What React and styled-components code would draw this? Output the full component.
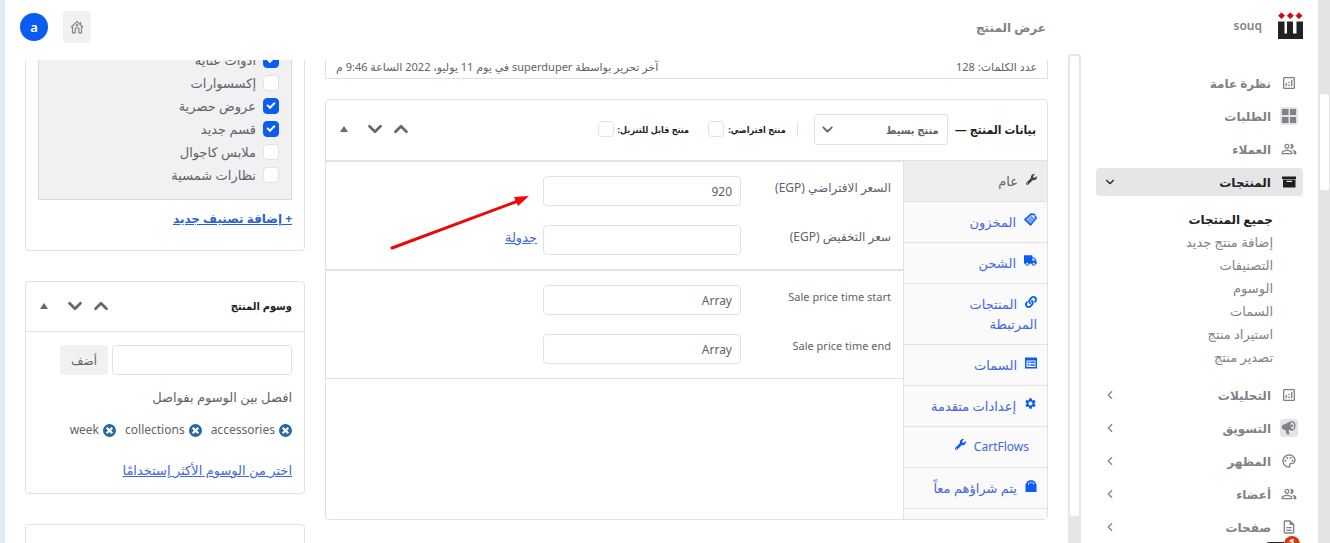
import React from "react";
import styled, { createGlobalStyle, css } from "styled-components";
import { FaWrench, FaTruck, FaLink } from "react-icons/fa";
import {
  MdOutlineAnalytics,
  MdOutlinePeopleAlt,
  MdOutlinePalette,
  MdOutlineDescription,
  MdSettings,
} from "react-icons/md";
import { ChevronDown, ChevronUp, ChevronLeft } from "lucide-react";

const c = {
  line: "#e2e2e4",
  track: "#e6e6e9",
  soft: "#f1f1f3",
  blue: "#0b5cf0",
  link: "#4468da",
  text: "#626266",
  mute: "#828286",
  dark: "#1f1f22",
};

const condensed = `"Noto Sans", "DejaVu Sans Condensed", "DejaVu Sans", sans-serif`;

const GlobalStyle = createGlobalStyle`
  *, *::before, *::after { box-sizing: border-box; }
  body { margin: 0; background: #fff; overflow: hidden; }
  body, button, input, select {
    font-family: "Noto Sans", "DejaVu Sans", sans-serif;
    font-size: 12px;
    color: ${c.text};
  }
  button { border: 0; padding: 0; background: none; cursor: pointer; }
  ul { list-style: none; margin: 0; padding: 0; }
  h1, h2, p { margin: 0; }
  svg { display: block; flex: none; }
`;

const Shell = styled.div`
  display: flex;
  height: 100vh;
  overflow: hidden;
  border-left: 5px solid #e1eaf3;
`;

const PageScroll = styled.div`
  width: 12px;
  flex: none;
  padding: 94px 1px 0 2px;
  background: #e4e4e7;
  &::before {
    content: "";
    display: block;
    height: 96px;
    border-radius: 2px;
    background: #fff;
  }
`;

const Sidebar = styled.aside`
  width: 237px;
  flex: none;
  padding: 12px 15px 0;
  position: relative;
`;

const Brand = styled.a`
  display: flex;
  align-items: center;
  gap: 16px;
  height: 27px;
  margin-bottom: 30px;
  font-size: 12px;
  font-weight: 600;
  color: ${c.mute};
  text-decoration: none;
`;

const NavList = styled.ul`
  display: flex;
  flex-direction: column;
  gap: 5px;
`;

const NavLink = styled.a`
  display: flex;
  align-items: center;
  gap: 9px;
  height: 28px;
  padding: 0 5px 0 7px;
  border-radius: 4px;
  font-size: 12px;
  font-weight: 700;
  text-decoration: none;
  color: ${(p) => (p.$active ? c.dark : c.mute)};
  background: ${(p) => (p.$active ? c.track : "transparent")};
`;

const NavIcon = styled.span`
  display: grid;
  place-items: center;
  width: 18px;
  height: 18px;
  border-radius: 3px;
  background: ${(p) => (p.$boxed ? "#e4e4e8" : "transparent")};
`;

const NavText = styled.span`
  flex: 1;
`;

const SubList = styled.ul`
  padding: 12px 30px 12px 0;
`;

const SubLink = styled.a`
  display: block;
  font-size: ${(p) => (p.$current ? 12 : 13)}px;
  line-height: 23px;
  text-decoration: none;
  white-space: nowrap;
  color: ${(p) => (p.$current ? c.dark : c.mute)};
  font-weight: ${(p) => (p.$current ? 700 : 400)};
`;

const Notice = styled.div`
  position: absolute;
  right: 18px;
  bottom: -9px;
  width: 16px;
  height: 16px;
  border-radius: 50%;
  background: #d43a12;
  color: #fff;
  font-size: 12px;
  line-height: 16px;
  text-align: center;
  font-weight: 700;
  &::after {
    content: "";
    position: absolute;
    right: 16px;
    top: 6px;
    width: 22px;
    height: 8px;
    border-radius: 8px 0 0 0;
    background: #222;
  }
`;

const Content = styled.div`
  flex: 1;
  min-width: 0;
  display: flex;
`;

const PaneScroll = styled.div`
  width: 13px;
  flex: none;
  margin-top: 54px;
  padding: 2px 2px 27px;
  border-radius: 3px 3px 0 0;
  background: ${c.track};
  &::before {
    content: "";
    display: block;
    height: 100%;
    border-radius: 2px;
    background: #fff;
  }
`;

const Pane = styled.div`
  flex: 1;
  min-width: 0;
  display: flex;
  flex-direction: column;
`;

const TopBar = styled.header`
  display: flex;
  align-items: center;
  gap: 15px;
  flex: none;
  height: 60px;
  padding: 0 22px 6px 15px;
`;

const PageTitle = styled.h1`
  flex: 1;
  font-size: 12px;
  font-weight: 700;
  color: ${c.mute};
`;

const HomeButton = styled.button`
  display: grid;
  place-items: center;
  width: 28px;
  height: 32px;
  border-radius: 3px;
  background: ${c.soft};
  color: #88888c;
`;

const Avatar = styled.button`
  width: 28px;
  height: 28px;
  border-radius: 50%;
  background: ${c.blue};
  color: #fff;
  font-size: 13px;
  font-weight: 600;
`;

const Viewport = styled.div`
  flex: 1;
  min-height: 0;
  overflow: hidden;
`;

const Columns = styled.div`
  display: flex;
  gap: 20px;
  margin-top: -12px;
  padding: 0 20px;
`;

const Main = styled.main`
  flex: 1;
  min-width: 0;
  display: flex;
  flex-direction: column;
  gap: 20px;
`;

const Aside = styled.div`
  width: 280px;
  flex: none;
  display: flex;
  flex-direction: column;
  gap: 30px;
`;

const StatusBar = styled.div`
  display: flex;
  justify-content: space-between;
  align-items: center;
  height: 31px;
  padding: 6px 10px 0;
  border: 1px solid ${c.line};
  border-top: 0;
  font-size: 11px;
`;

const Panel = styled.section`
  border: 1px solid ${c.line};
  border-radius: 4px;
  ${(p) =>
    p.$continued &&
    css`
      border-top: 0;
      border-radius: 0 0 4px 4px;
    `}
`;

const PanelHead = styled.div`
  display: flex;
  align-items: center;
  height: ${(p) => (p.$tall ? 61 : 50)}px;
  padding: 0 ${(p) => (p.$tall ? 11 : 12)}px 2px 12px;
  border-bottom: 1px solid ${c.line};
`;

const PanelTitle = styled.h2`
  font-family: ${condensed};
  font-size: ${(p) => (p.$large ? 12 : 11)}px;
  font-weight: 700;
  color: ${c.dark};
  white-space: nowrap;
`;

const SelectWrap = styled.div`
  position: relative;
  margin: 0 7px 0 10px;
  svg {
    position: absolute;
    left: 5px;
    top: 7px;
    pointer-events: none;
  }
`;

const Select = styled.select`
  appearance: none;
  display: block;
  width: 134px;
  height: 31px;
  padding: 0 8px;
  border: 1px solid ${c.line};
  border-radius: 3px;
  background: #fff;
  font-family: ${condensed};
  font-size: 11px;
  font-weight: 700;
`;

const Options = styled.div`
  display: flex;
  gap: 19px;
  margin-right: 6px;
  padding-right: 11px;
  border-right: 1px solid ${c.line};
`;

const OptionLabel = styled.label`
  display: flex;
  align-items: center;
  gap: 4px;
  height: 14px;
  font-family: ${condensed};
  font-size: 9px;
  font-weight: 700;
  color: ${c.dark};
  white-space: nowrap;
`;

const Check = styled.input.attrs({ type: "checkbox" })`
  appearance: none;
  flex: none;
  display: grid;
  place-items: center;
  width: 16px;
  height: 16px;
  margin: 0;
  border: 1px solid ${c.line};
  border-radius: 4px;
  background: #fff;
  &:checked {
    border-color: ${c.blue};
    background: ${c.blue};
  }
  &:checked::after {
    content: "";
    width: 8px;
    height: 5px;
    border: solid #fff;
    border-width: 0 0 2px 2px;
    transform: translateY(-1px) rotate(-45deg);
  }
`;

const HeadTools = styled.div`
  display: flex;
  align-items: center;
  gap: 8px;
  margin-right: auto;
  color: #68686c;
`;

const ToolButton = styled.button`
  display: grid;
  place-items: center;
  place-content: center;
  width: 18px;
  height: 24px;
  color: inherit;
  &:last-child {
    width: 12px;
    margin-right: 8px;
  }
`;

const Split = styled.div`
  display: flex;
`;

const Tabs = styled.ul`
  width: 144px;
  flex: none;
  padding-bottom: 10px;
  border-left: 1px solid ${c.line};
  background: #fafafa;
`;

const Tab = styled.a`
  display: block;
  padding: 10px 10px 10px 20px;
  border-bottom: 1px solid ${c.line};
  font-size: 13px;
  line-height: 20px;
  text-decoration: none;
  color: ${(p) => (p.$active ? c.text : c.link)};
  background: ${(p) => (p.$active ? "#eee" : "transparent")};
  svg {
    display: inline-block;
    margin-left: 8px;
    vertical-align: 1px;
    color: ${(p) => (p.$active ? "#444" : c.blue)};
  }
  ${(p) =>
    p.$iconLast &&
    css`
      padding-right: 18px;
      font-size: 12px;
      svg {
        margin: 0 8px 0 0;
      }
    `}
`;

const Form = styled.form`
  flex: 1;
  min-width: 0;
  position: relative;
`;

const Group = styled.div`
  display: flex;
  flex-direction: column;
  gap: 19px;
  padding: 14px 12px;
  border: solid ${c.line};
  border-width: 1px 0;
`;

const Field = styled.div`
  display: flex;
`;

const FieldLabel = styled.label`
  width: 150px;
  flex: none;
  font-size: 12px;
  line-height: 24px;
  &:lang(en) {
    font-size: 11px;
  }
`;

const TextInput = styled.input`
  width: ${(p) => (p.$wide ? 180 : 198)}px;
  height: 30px;
  padding: 0 8px;
  border: 1px solid ${c.line};
  border-radius: 4px;
  background: #fff;
  text-align: right;
  font-size: 12px;
`;

const TextLink = styled.a`
  color: ${(p) => (p.$bold ? "#2a5fd6" : c.link)};
  font-size: ${(p) => (p.$bold ? 12 : 13)}px;
  line-height: 24px;
  font-weight: ${(p) => (p.$bold ? 700 : 400)};
`;

const FieldLink = styled(TextLink)`
  margin-right: 6px;
`;

const Pointer = styled.svg`
  position: absolute;
  left: 62px;
  top: 34px;
`;

const CategoryBox = styled.ul`
  margin: 0 12px;
  padding: 0 12px 13px;
  border: 1px solid #d9d9dc;
  border-top: 0;
  background: ${c.soft};
`;

const CategoryLabel = styled.label`
  display: flex;
  align-items: center;
  gap: 7px;
  height: 23px;
  font-size: 13px;
`;

const PanelFoot = styled.div`
  padding: 7px 12px 19px;
`;

const TagBody = styled.div`
  padding: 13px 12px 11px;
`;

const AddRow = styled.div`
  display: flex;
  gap: 4px;
`;

const AddButton = styled.button`
  width: 48px;
  height: 30px;
  border-radius: 3px;
  background: ${c.soft};
`;

const Hint = styled.p`
  padding-top: 10px;
  font-size: 13px;
  line-height: 24px;
`;

const TagList = styled.ul`
  display: flex;
  gap: 9px;
  padding: 9px 0 16px;
  line-height: 24px;
`;

const Tag = styled.li`
  display: flex;
  align-items: center;
  gap: 4px;
`;

const Chart = () => <MdOutlineAnalytics size={16} />;
const People = () => <MdOutlinePeopleAlt size={16} />;

const GridIcon = () => (
  <svg width="16" height="16" viewBox="0 0 16 16" fill="currentColor">
    <path d="M1 1h6.5v6H1zM9 1h6v6H9zM1 9h6.5v6H1zM9 9h6v6H9z" />
  </svg>
);

const MegaphoneIcon = () => (
  <svg width="16" height="16" viewBox="0 0 16 16" fill="currentColor">
    <path fillRule="evenodd" d="M10.500 1c2.200 0 4 2 4 4.800S12.900 10.800 11 10.800c-.6 0-1-.2-1.500-.5L7.500 10l1 4.500H5.800L4.500 10.200 1.500 9C.6 7.500.7 6.300 1.300 5.200zM10.800 2.300c-1 .4-1.400 1.700-1.200 3.300.2 1.900 1 3.400 2 3.700 1 .1 1.700-1.500 1.500-3.600-.2-2-1.300-3.700-2.300-3.400z" />
    <circle cx="11" cy="5.800" r="1.200" />
  </svg>
);

const ArchiveIcon = () => (
  <svg width="16" height="14" viewBox="0 0 16 14" fill="currentColor">
    <path fillRule="evenodd" d="M1 1.500h14V4H1zM2 4.600h12.500V12.500H2zM5.500 5.800h5.500v1.200H5.500z" />
  </svg>
);

const HomeIcon = () => (
  <svg width="14" height="14" viewBox="0 0 14 14" fill="none" stroke="currentColor" strokeWidth="1.200">
    <path d="M1 7.200L7 1.500l6 5.700M2.500 6v6.800h2.700V8h3.600v4.800h2.700V6M10.600 4.800V2" />
    <circle cx="7" cy="5.300" r=".7" />
  </svg>
);

const Logo = () => (
  <svg width="25" height="27" viewBox="0 0 25 27">
    <path fill="#222" d="M0 9.500h6.500v12H9v-12h6v12h3.500v-12H25V27H0z" />
    <path
      fill="#cf0a14"
      stroke="#cf0a14"
      strokeWidth=".8"
      strokeLinejoin="round"
      d="M3.500 .7L6.500 3.700 3.500 6.700 .5 3.700zM12.300 .7L15.300 3.700l-3 3L9.300 3.700zM21 .7L24 3.700 21 6.700l-3-3z"
    />
  </svg>
);

const TicketIcon = () => (
  <svg width="13" height="13" viewBox="0 0 13 13">
    <path d="M.8 6.500L7 1l3.500.3.500 1.500 1.500 2L6.500 12z" fill="#8fb2f5" stroke="currentColor" strokeWidth="1.300" />
    <path d="M3.500 7.500l3.500 3M5.200 5.800l3.500 3M7 4.200l3.400 3" stroke="currentColor" strokeWidth=".5" />
    <circle cx="9.500" cy="3.300" r="1" fill="#fff" />
  </svg>
);

const ListIcon = () => (
  <svg width="12" height="12" viewBox="0 0 12 12" fill="currentColor">
    <path
      fillRule="evenodd"
      d="M0 .5h12v11H0zM1.500 3.500v6.500h9V3.500zM2.500 4.500h2v1.500h-2zM5.500 4.500h4.200v1.500H5.500zM2.500 7.300h2v1.500h-2zM5.500 7.300h4.200v1.500H5.500z"
    />
  </svg>
);

const BagIcon = () => (
  <svg width="12" height="12" viewBox="0 0 12 12">
    <path d="M2 2C2.500-.2 9.500-.2 10 2L11.500 4.500V12H.5V4.500z" fill="currentColor" />
    <path d="M3.500 4.500V2.700M5.200 3.300V1.800M7 3.300V1.800M8.600 4.500V2.700" stroke="#fff" strokeWidth=".9" />
  </svg>
);

const RemoveIcon = () => (
  <svg width="13" height="13" viewBox="0 0 13 13">
    <circle cx="6.500" cy="6.500" r="6.500" fill="#2468a6" />
    <path d="M3.700 3.700l5.600 5.600M9.300 3.700L3.700 9.300" stroke="#fff" strokeWidth="2.200" />
  </svg>
);

const Triangle = () => (
  <svg width="8" height="6" viewBox="0 0 8 6" fill="currentColor">
    <path d="M4 0l4 6H0z" />
  </svg>
);

const topNav = [
  { label: "نظرة عامة", icon: <Chart /> },
  { label: "الطلبات", icon: <GridIcon />, boxed: true },
  { label: "العملاء", icon: <People /> },
  { label: "المنتجات", icon: <ArchiveIcon />, active: true },
];

const subNav = [
  "جميع المنتجات",
  "إضافة منتج جديد",
  "التصنيفات",
  "الوسوم",
  "السمات",
  "استيراد منتج",
  "تصدير منتج",
];

const bottomNav = [
  { label: "التحليلات", icon: <Chart />, more: true },
  { label: "التسويق", icon: <MegaphoneIcon />, boxed: true, more: true },
  { label: "المظهر", icon: <MdOutlinePalette size={16} />, more: true },
  { label: "أعضاء", icon: <People />, more: true },
  { label: "صفحات", icon: <MdOutlineDescription size={16} />, more: true },
];

const tabs = [
  { label: "عام", icon: <FaWrench size={11} />, active: true },
  { label: "المخزون", icon: <TicketIcon /> },
  { label: "الشحن", icon: <FaTruck size={13} /> },
  { label: "المنتجات المرتبطة", icon: <FaLink size={12} /> },
  { label: "السمات", icon: <ListIcon /> },
  { label: "إعدادات متقدمة", icon: <MdSettings size={13} /> },
  { label: "CartFlows", icon: <FaWrench size={11} />, iconLast: true },
  { label: "يتم شراؤهم معاً", icon: <BagIcon /> },
];

const categories = [
  ["أدوات عناية", true],
  ["إكسسوارات", false],
  ["عروض حصرية", true],
  ["قسم جديد", true],
  ["ملابس كاجوال", false],
  ["نظارات شمسية", false],
];

function NavItem({ label, icon, boxed, active, more }) {
  return (
    <li>
      <NavLink href="#" $active={active}>
        <NavIcon $boxed={boxed}>{icon}</NavIcon>
        <NavText>{label}</NavText>
        {active && <ChevronDown size={14} />}
        {more && <ChevronLeft size={14} />}
      </NavLink>
    </li>
  );
}

function Tools() {
  return (
    <HeadTools>
      <ToolButton type="button" aria-label="نقل لأعلى">
        <ChevronUp size={22} strokeWidth={3} />
      </ToolButton>
      <ToolButton type="button" aria-label="نقل لأسفل">
        <ChevronDown size={22} strokeWidth={3} />
      </ToolButton>
      <ToolButton type="button" aria-label="طي">
        <Triangle />
      </ToolButton>
    </HeadTools>
  );
}

function TextField({ id, label, lang, value, children }) {
  return (
    <Field>
      <FieldLabel htmlFor={id} lang={lang}>
        {label}
      </FieldLabel>
      <TextInput id={id} type="text" defaultValue={value} />
      {children}
    </Field>
  );
}

function ProductData() {
  return (
    <Panel>
      <PanelHead $tall>
        <PanelTitle as="label" htmlFor="product-type" $large>
          بيانات المنتج —
        </PanelTitle>
        <SelectWrap>
          <Select id="product-type">
            <option>منتج بسيط</option>
          </Select>
          <ChevronDown size={17} strokeWidth={2.5} />
        </SelectWrap>
        <Options>
          <OptionLabel>
            منتج افتراضي:
            <Check />
          </OptionLabel>
          <OptionLabel>
            منتج قابل للتنزيل:
            <Check />
          </OptionLabel>
        </Options>
        <Tools />
      </PanelHead>
      <Split>
        <Tabs>
          {tabs.map((t) => (
            <li key={t.label}>
              <Tab href="#" $active={t.active} $iconLast={t.iconLast}>
                {!t.iconLast && t.icon}
                {t.label}
                {t.iconLast && t.icon}
              </Tab>
            </li>
          ))}
        </Tabs>
        <Form>
          <Group>
            <TextField id="price" label="السعر الافتراضي (EGP)" value="920" />
            <TextField id="sale" label="سعر التخفيض (EGP)" value="">
              <FieldLink href="#">جدولة</FieldLink>
            </TextField>
          </Group>
          <Group>
            <TextField id="start" lang="en" label="Sale price time start" value="Array" />
            <TextField id="end" lang="en" label="Sale price time end" value="Array" />
          </Group>
          <Pointer width="144" height="58" viewBox="0 0 144 58" aria-hidden="true">
            <path d="M4 53L130 6" stroke="#ea0808" strokeWidth="3" strokeLinecap="round" />
            <path d="M141 1L126 2l4 9z" fill="#f80505" />
          </Pointer>
        </Form>
      </Split>
    </Panel>
  );
}

export default function App() {
  return (
    <>
      <GlobalStyle />
      <Shell dir="rtl" lang="ar">
        <PageScroll />
        <Sidebar>
          <Brand href="#">
            <Logo />
            souq
          </Brand>
          <nav>
            <NavList>
              {topNav.map((n) => (
                <NavItem key={n.label} {...n} />
              ))}
            </NavList>
            <SubList>
              {subNav.map((label, i) => (
                <li key={label}>
                  <SubLink href="#" $current={i === 0}>
                    {label}
                  </SubLink>
                </li>
              ))}
            </SubList>
            <NavList>
              {bottomNav.map((n) => (
                <NavItem key={n.label} {...n} />
              ))}
            </NavList>
          </nav>
          <Notice>1</Notice>
        </Sidebar>
        <Content>
          <PaneScroll />
          <Pane>
            <TopBar>
              <PageTitle>عرض المنتج</PageTitle>
              <HomeButton type="button" aria-label="الرئيسية">
                <HomeIcon />
              </HomeButton>
              <Avatar type="button">a</Avatar>
            </TopBar>
            <Viewport>
              <Columns>
                <Main>
                  <StatusBar>
                    <span>عدد الكلمات: 128</span>
                    <span>آخر تحرير بواسطة superduper في يوم 11 يوليو، 2022 الساعة 9:46 م</span>
                  </StatusBar>
                  <ProductData />
                </Main>
                <Aside>
                  <Panel $continued>
                    <CategoryBox>
                      {categories.map(([label, checked]) => (
                        <li key={label}>
                          <CategoryLabel>
                            <Check defaultChecked={checked} />
                            {label}
                          </CategoryLabel>
                        </li>
                      ))}
                    </CategoryBox>
                    <PanelFoot>
                      <TextLink href="#" $bold>
                        + إضافة تصنيف جديد
                      </TextLink>
                    </PanelFoot>
                  </Panel>
                  <Panel>
                    <PanelHead>
                      <PanelTitle>وسوم المنتج</PanelTitle>
                      <Tools />
                    </PanelHead>
                    <TagBody>
                      <AddRow>
                        <TextInput $wide type="text" aria-label="وسوم المنتج" />
                        <AddButton type="button">أضف</AddButton>
                      </AddRow>
                      <Hint>افصل بين الوسوم بفواصل</Hint>
                      <TagList>
                        {["accessories", "collections", "week"].map((t) => (
                          <Tag key={t}>
                            <button type="button" aria-label={`إزالة ${t}`}>
                              <RemoveIcon />
                            </button>
                            {t}
                          </Tag>
                        ))}
                      </TagList>
                      <TextLink href="#">اختر من الوسوم الأكثر إستخدامًا</TextLink>
                    </TagBody>
                  </Panel>
                  <Panel>
                    <PanelHead />
                  </Panel>
                </Aside>
              </Columns>
            </Viewport>
          </Pane>
        </Content>
      </Shell>
    </>
  );
}
